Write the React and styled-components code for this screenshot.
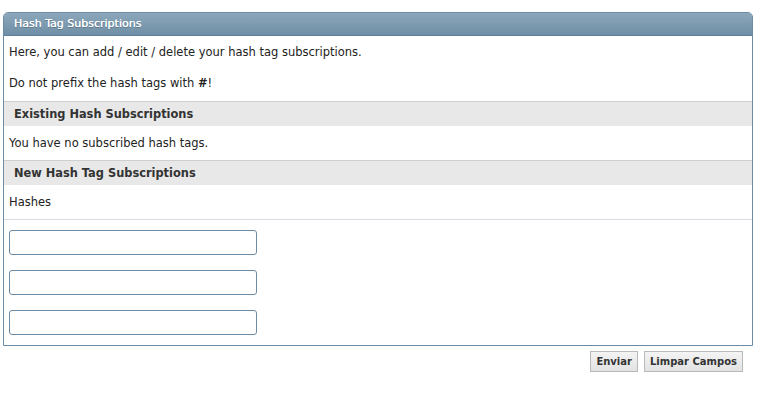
import React from "react"
import styled, { createGlobalStyle } from "styled-components"

const Global = createGlobalStyle`
    body {
        margin: 0;
        background: #fff;
        font-family: "DejaVu Sans", Verdana, sans-serif;
        color: #222;
    }
`

const Page = styled.div`
    padding: 12px 0 0 3px;
    width: 750px;
`

const Panel = styled.div`
    border: 1px solid #6c8ca6;
    border-radius: 5px 5px 0 0;
    background: #fff;
`

const Header = styled.div`
    height: 22px;
    line-height: 22px;
    padding-left: 10px;
    background: linear-gradient(#8ca7ba, #6f8fa6);
    border-bottom: 1px solid #5f7f99;
    border-radius: 4px 4px 0 0;
    color: #fff;
    font-size: 11px;
    text-shadow: 0 0 0.6px #fff, 0 1px 0 rgba(0, 0, 0, 0.25);
`

const Intro = styled.div`
    display: flex;
    flex-direction: column;
    gap: 15px;
    padding: 8px 5px 10px;
`

const Line = styled.p`
    margin: 0;
    line-height: 16px;
    font-size: 11.5px;
    color: #222;
`

const Text = styled.p`
    margin: 0;
    padding: 0 5px;
    height: 34px;
    line-height: 34px;
    font-size: 11.5px;
    color: #222;
`

const Section = styled.div`
    height: 24px;
    line-height: 24px;
    padding-left: 10px;
    background: #e8e8e8;
    border-top: 1px solid #cfcfcf;
    font-size: 11.4px;
    font-weight: bold;
    color: #333;
`

const Fields = styled.div`
    display: flex;
    flex-direction: column;
    gap: 15px;
    padding: 10px 5px 10px;
    border-top: 1px solid #d7dde3;
`

const Input = styled.input`
    box-sizing: border-box;
    width: 248px;
    height: 25px;
    margin: 0;
    border: 1px solid #6c8ca6;
    border-radius: 3px;
    background: #fff;
    outline: none;
`

const Actions = styled.div`
    display: flex;
    justify-content: flex-end;
    gap: 6px;
    padding: 5px 10px 0 0;
`

const Button = styled.button`
    height: 21px;
    padding: 0 5px;
    border: 1px solid #b9b9b9;
    background: linear-gradient(#f4f4f4, #e2e2e2);
    font-family: "DejaVu Sans", Verdana, sans-serif;
    font-size: 10px;
    font-weight: bold;
    color: #333;
    cursor: pointer;
`

export default function App() {
    return (
        <Page>
            <Global />
            <Panel>
                <Header>Hash Tag Subscriptions</Header>
                <Intro>
                    <Line>Here, you can add / edit / delete your hash tag subscriptions.</Line>
                    <Line>Do not prefix the hash tags with <b>#</b>!</Line>
                </Intro>
                <Section>Existing Hash Subscriptions</Section>
                <Text>You have no subscribed hash tags.</Text>
                <Section>New Hash Tag Subscriptions</Section>
                <Text>Hashes</Text>
                <Fields>
                    <Input type="text" />
                    <Input type="text" />
                    <Input type="text" />
                </Fields>
            </Panel>
            <Actions>
                <Button>Enviar</Button>
                <Button>Limpar Campos</Button>
            </Actions>
        </Page>
    )
}
